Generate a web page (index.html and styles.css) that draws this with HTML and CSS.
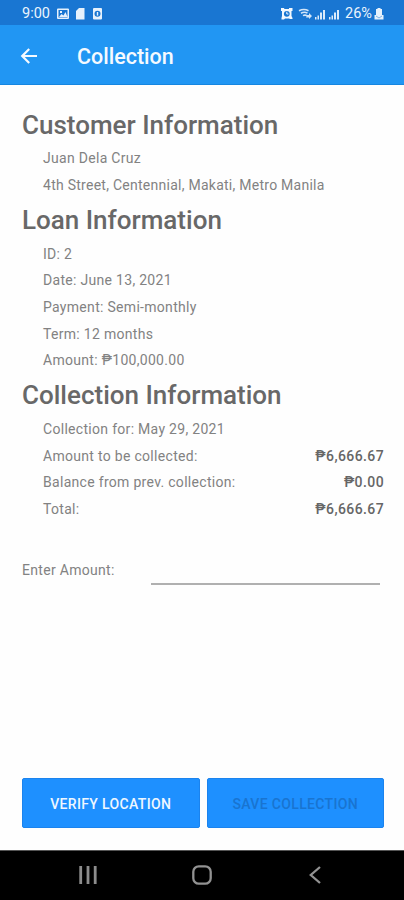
FILE: index.html
```html
<!DOCTYPE html>
<html lang="en">
<head>
<meta charset="utf-8">
<title>Collection</title>
<link rel="stylesheet" href="styles.css">
</head>
<body>
<div class="status">
  <span class="clock">9:00</span>
  <svg class="left-icons" width="48" height="14" viewBox="0 0 48 14">
    <path fill="#e6f1fc" fill-rule="evenodd" d="M1 1.500h10a1 1 0 0 1 1 1v8.500a1 1 0 0 1-1 1H1a1 1 0 0 1-1-1v-8.500a1 1 0 0 1 1-1zM1.500 3v7.500h9V3zM2 10l2.500-3 2 1.500 2-3.500 2 5zM3 4h2v2H3z"/>
    <path fill="#e6f1fc" d="M22 1h5.500v11.500H19V4z"/>
    <path fill="#e6f1fc" fill-rule="evenodd" d="M37 1h7a1 1 0 0 1 1 1v9.500a1 1 0 0 1-1 1h-7a1 1 0 0 1-1-1V2a1 1 0 0 1 1-1zM40.500 3.800a3 3 0 1 0 0 6 3 3 0 0 0 0-6z"/>
    <path fill="#e6f1fc" d="M39.800 5h1.400v3.600h-1.400z"/>
  </svg>
  <svg class="right-icons" width="62" height="14" viewBox="0 0 62 14">
    <path fill="#f2f8fe" fill-rule="evenodd" d="M0 1h3.200v1H8V1h3.500v3h-1v5l1 2v1H9L8 11.500H4l-1 1H.5V11L1 9V4H0zM5.800 3.900a2.900 2.900 0 1 0 0 5.800 2.900 2.900 0 0 0 0-5.800z"/>
    <path fill="none" stroke="#f2f8fe" d="M5.800 4.800V7H7.500"/>
    <g fill="none" stroke="#d3e6f9" stroke-width="1.600"><path d="M18 3.800q5-2.600 9.500 0M20 6.200q3.500-2 6.500 0M22 8.600q2-1 4 0"/></g>
    <path fill="#d3e6f9" d="M26 8h2V6l3 3-3 3v-1.500h-3z"/>
    <path fill="#dcebfa" d="M34 10h1.500v2.500H34zM36.500 8.500H38v4h-1.500zM39 5.500h2v7h-2zM42 3h2v9.500h-2zM48 10h1.500v2.500H48zM50.500 8.500H52v4h-1.500zM53 5.500h2v7h-2zM56 3h2v9.500h-2z"/>
  </svg>
  <span class="percent">26%</span>
  <svg class="battery" width="10" height="14" viewBox="0 0 10 14"><path fill="#e6f1fc" d="M3.500 1h3v1H8v6h1.500v4.500h-9V8H2V2h1.500z"/><path fill="none" stroke="#7fb2e6" d="M2 9l3 2 3-2"/></svg>
</div>
<header class="appbar">
  <svg class="back" width="18" height="18" viewBox="0 0 18 18"><path d="M17 9H2.500M9.200 2L2.200 9L9.200 16" fill="none" stroke="#f5faff" stroke-width="2.200"/></svg>
  <h1 class="title">Collection</h1>
</header>
<main class="content">
  <h2><span>Customer Information</span></h2>
  <p><span>Juan Dela Cruz</span></p>
  <p><span class="address">4th Street, Centennial, Makati, Metro Manila</span></p>
  <h2><span>Loan Information</span></h2>
  <p><span>ID: 2</span></p>
  <p><span>Date: June 13, 2021</span></p>
  <p><span>Payment: Semi-monthly</span></p>
  <p><span>Term: 12 months</span></p>
  <p><span>Amount: ₱100,000.00</span></p>
  <h2><span>Collection Information</span></h2>
  <p><span>Collection for: May 29, 2021</span></p>
  <p><span>Amount to be collected:</span><b>₱6,666.67</b></p>
  <p><span>Balance from prev. collection:</span><b>₱0.00</b></p>
  <p><span>Total:</span><b>₱6,666.67</b></p>
  <div class="entry"><label for="amount">Enter Amount:</label><input id="amount" type="text"></div>
  <div class="actions">
    <button type="button">VERIFY LOCATION</button>
    <button type="button" class="save" disabled>SAVE COLLECTION</button>
  </div>
</main>
<nav class="navbar">
  <svg width="20" height="20" viewBox="0 0 20 20"><path d="M2.700 1v18M10 1v18M17.200 1v18" stroke="#8c8c8c" stroke-width="2.800"/></svg>
  <svg width="20" height="20" viewBox="0 0 20 20"><rect x="1.300" y="1.300" width="17.400" height="17.400" rx="5.500" fill="none" stroke="#929292" stroke-width="2.300"/></svg>
  <svg width="20" height="20" viewBox="0 0 20 20"><path d="M15 2L5.800 10L15 18" fill="none" stroke="#929292" stroke-width="2.300"/></svg>
</nav>
</body>
</html>
```
FILE: styles.css
```css
* { box-sizing: border-box; }
body {
  margin: 0;
  width: 404px;
  height: 900px;
  display: flex;
  flex-direction: column;
  overflow: hidden;
  background: #fefefe;
  color: #828282;
  font-family: Roboto, "Liberation Sans", sans-serif;
  font-size: 14px;
}
.status {
  height: 25px;
  padding: 2px 20px 0 22px;
  display: flex;
  align-items: center;
  flex-shrink: 0;
  background: #1976d2;
  color: #eaf4fd;
  font-size: 14.5px;
}
.clock { width: 35px; }
.right-icons { margin-left: auto; margin-right: 2px; }
.percent { width: 29px; white-space: nowrap; }
.appbar {
  height: 60px;
  padding: 2px 20px 0;
  display: flex;
  align-items: center;
  gap: 39px;
  flex-shrink: 0;
  background: #2196f3;
  border-bottom: 1px solid #1686e0;
  color: #f5faff;
}
.title { margin: 0; padding-top: 1px; font-size: 21.500px; font-weight: 500; }
.content {
  flex: 1;
  padding: 18px 20px 0 22px;
  display: flex;
  flex-direction: column;
}
h2 {
  height: 42.200px;
  margin: 0;
  padding-top: 1px;
  display: flex;
  align-items: center;
  color: #686868;
  font-size: 26px;
  font-weight: 500;
  line-height: 1;
}
p {
  height: 26.600px;
  margin: 0;
  padding-left: 21px;
  display: flex;
  justify-content: space-between;
  align-items: center;
  letter-spacing: .3px;
}
.address { letter-spacing: .26px; }
b { color: #666; font-weight: 500; letter-spacing: .4px; }
.entry {
  height: 34px;
  margin-top: 29px;
  padding-right: 4px;
  display: flex;
  justify-content: space-between;
  letter-spacing: .3px;
}
.entry label { align-self: center; padding-top: 4px; }
.entry input {
  width: 229px;
  padding: 0;
  border: 0;
  border-bottom: 2px solid #b0b0b0;
  background: none;
  outline: none;
}
.actions {
  margin-top: auto;
  margin-bottom: 22px;
  display: grid;
  grid-template-columns: 1fr 1fr;
  gap: 7px;
}
button {
  height: 50px;
  padding: 2px 0 0;
  border: 1px solid #1b83ee;
  border-radius: 2px;
  background: #1e90ff;
  color: #eff7ff;
  font: 500 14px Roboto, sans-serif;
  letter-spacing: .35px;
}
.save { color: #1974d0; }
.navbar {
  height: 50px;
  padding: 0 79px 2px 78px;
  display: flex;
  justify-content: space-between;
  align-items: center;
  flex-shrink: 0;
  background: #000;
  border-top: 1px solid #555;
}
```
